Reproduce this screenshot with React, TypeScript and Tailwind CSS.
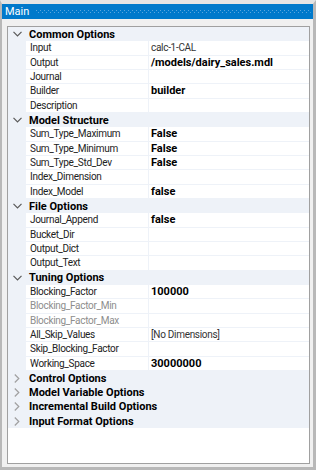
import React from 'react';

type Prop = { name: string; value?: string; bold?: boolean; disabled?: boolean };
type Section = { title: string; open: boolean; props: Prop[] };

const sections: Section[] = [
    {
        title: 'Common Options',
        open: true,
        props: [
            { name: 'Input', value: 'calc-1-CAL' },
            { name: 'Output', value: '/models/dairy_sales.mdl', bold: true },
            { name: 'Journal' },
            { name: 'Builder', value: 'builder', bold: true },
            { name: 'Description' },
        ],
    },
    {
        title: 'Model Structure',
        open: true,
        props: [
            { name: 'Sum_Type_Maximum', value: 'False', bold: true },
            { name: 'Sum_Type_Minimum', value: 'False', bold: true },
            { name: 'Sum_Type_Std_Dev', value: 'False', bold: true },
            { name: 'Index_Dimension' },
            { name: 'Index_Model', value: 'false', bold: true },
        ],
    },
    {
        title: 'File Options',
        open: true,
        props: [
            { name: 'Journal_Append', value: 'false', bold: true },
            { name: 'Bucket_Dir' },
            { name: 'Output_Dict' },
            { name: 'Output_Text' },
        ],
    },
    {
        title: 'Tuning Options',
        open: true,
        props: [
            { name: 'Blocking_Factor', value: '100000', bold: true },
            { name: 'Blocking_Factor_Min', disabled: true },
            { name: 'Blocking_Factor_Max', disabled: true },
            { name: 'All_Skip_Values', value: '[No Dimensions]' },
            { name: 'Skip_Blocking_Factor' },
            { name: 'Working_Space', value: '30000000', bold: true },
        ],
    },
    { title: 'Control Options', open: false, props: [] },
    { title: 'Model Variable Options', open: false, props: [] },
    { title: 'Incremental Build Options', open: false, props: [] },
    { title: 'Input Format Options', open: false, props: [] },
];

function Chevron({ open }: { open: boolean }) {
    return open ? (
        <svg width="9" height="6" viewBox="0 0 9 6" className="text-[#5a5a5a]">
            <path d="M0.5 0.8 L4.5 4.8 L8.5 0.8" fill="none" stroke="currentColor" strokeWidth="1.2" />
        </svg>
    ) : (
        <svg width="6" height="9" viewBox="0 0 6 9" className="text-[#a0a0a0]">
            <path d="M0.8 0.5 L4.8 4.5 L0.8 8.5" fill="none" stroke="currentColor" strokeWidth="1.2" />
        </svg>
    );
}

function Header({ section }: { section: Section }) {
    return (
        <div className="flex h-[14.33px] items-center bg-[#eef2f8]">
            <div className="flex w-[18px] shrink-0 justify-center">
                <Chevron open={section.open} />
            </div>
            <div className="pl-[3px] text-[11px] font-bold text-black">{section.title}</div>
        </div>
    );
}

function Row({ prop }: { prop: Prop }) {
    return (
        <div className="flex h-[14.33px] bg-[#eef2f8]">
            <div className="w-[18px] shrink-0" />
            <div
                className={`flex w-[122px] shrink-0 items-center border-b border-[#eef2f8] bg-white pl-[4px] tracking-[-0.3px] ${
                    prop.disabled ? 'text-[#8d8d8d]' : 'text-[#222]'
                }`}
            >
                {prop.name}
            </div>
            <div className="w-px shrink-0" />
            <div
                className={`flex flex-1 items-center border-b border-[#eef2f8] bg-white pl-[2px] ${
                    prop.bold ? 'text-[11px] font-bold text-black' : 'tracking-[-0.3px] text-[#333]'
                }`}
            >
                {prop.value}
            </div>
        </div>
    );
}

export default function App() {
    return (
        <div
            className="flex h-[470px] w-[316px] flex-col border-t-[4px] border-r-[3px] border-b-[3px] border-l-2 border-[#b8b8b8] border-t-[#e4e4e4] bg-[#f0f0f0] text-[10px] leading-[13px]"
            style={{ fontFamily: 'Roboto, "Segoe UI", sans-serif' }}
        >
            <div className="flex h-[15px] shrink-0 items-center bg-[#0079cb]">
                <span className="pl-[3px] text-[11px] text-white">Main</span>
                <svg className="ml-[7px] mr-[2px] h-[4px] flex-1" preserveAspectRatio="none">
                    <defs>
                        <pattern id="dots" width="4" height="4" patternUnits="userSpaceOnUse">
                            <rect x="0" y="0" width="1" height="1" fill="#5aa6de" />
                            <rect x="2" y="2" width="1" height="1" fill="#5aa6de" />
                        </pattern>
                    </defs>
                    <rect width="100%" height="100%" fill="url(#dots)" />
                </svg>
            </div>

            <div className="flex flex-1 flex-col pt-[7px] pl-[5px] pr-[3px] pb-[3px]">
                <div className="flex-1 overflow-hidden border border-[#a0a0a0] bg-white">
                    {sections.map((s) => (
                        <div key={s.title}>
                            <Header section={s} />
                            {s.open && s.props.map((p) => <Row key={p.name} prop={p} />)}
                        </div>
                    ))}
                </div>
            </div>
        </div>
    );
}
